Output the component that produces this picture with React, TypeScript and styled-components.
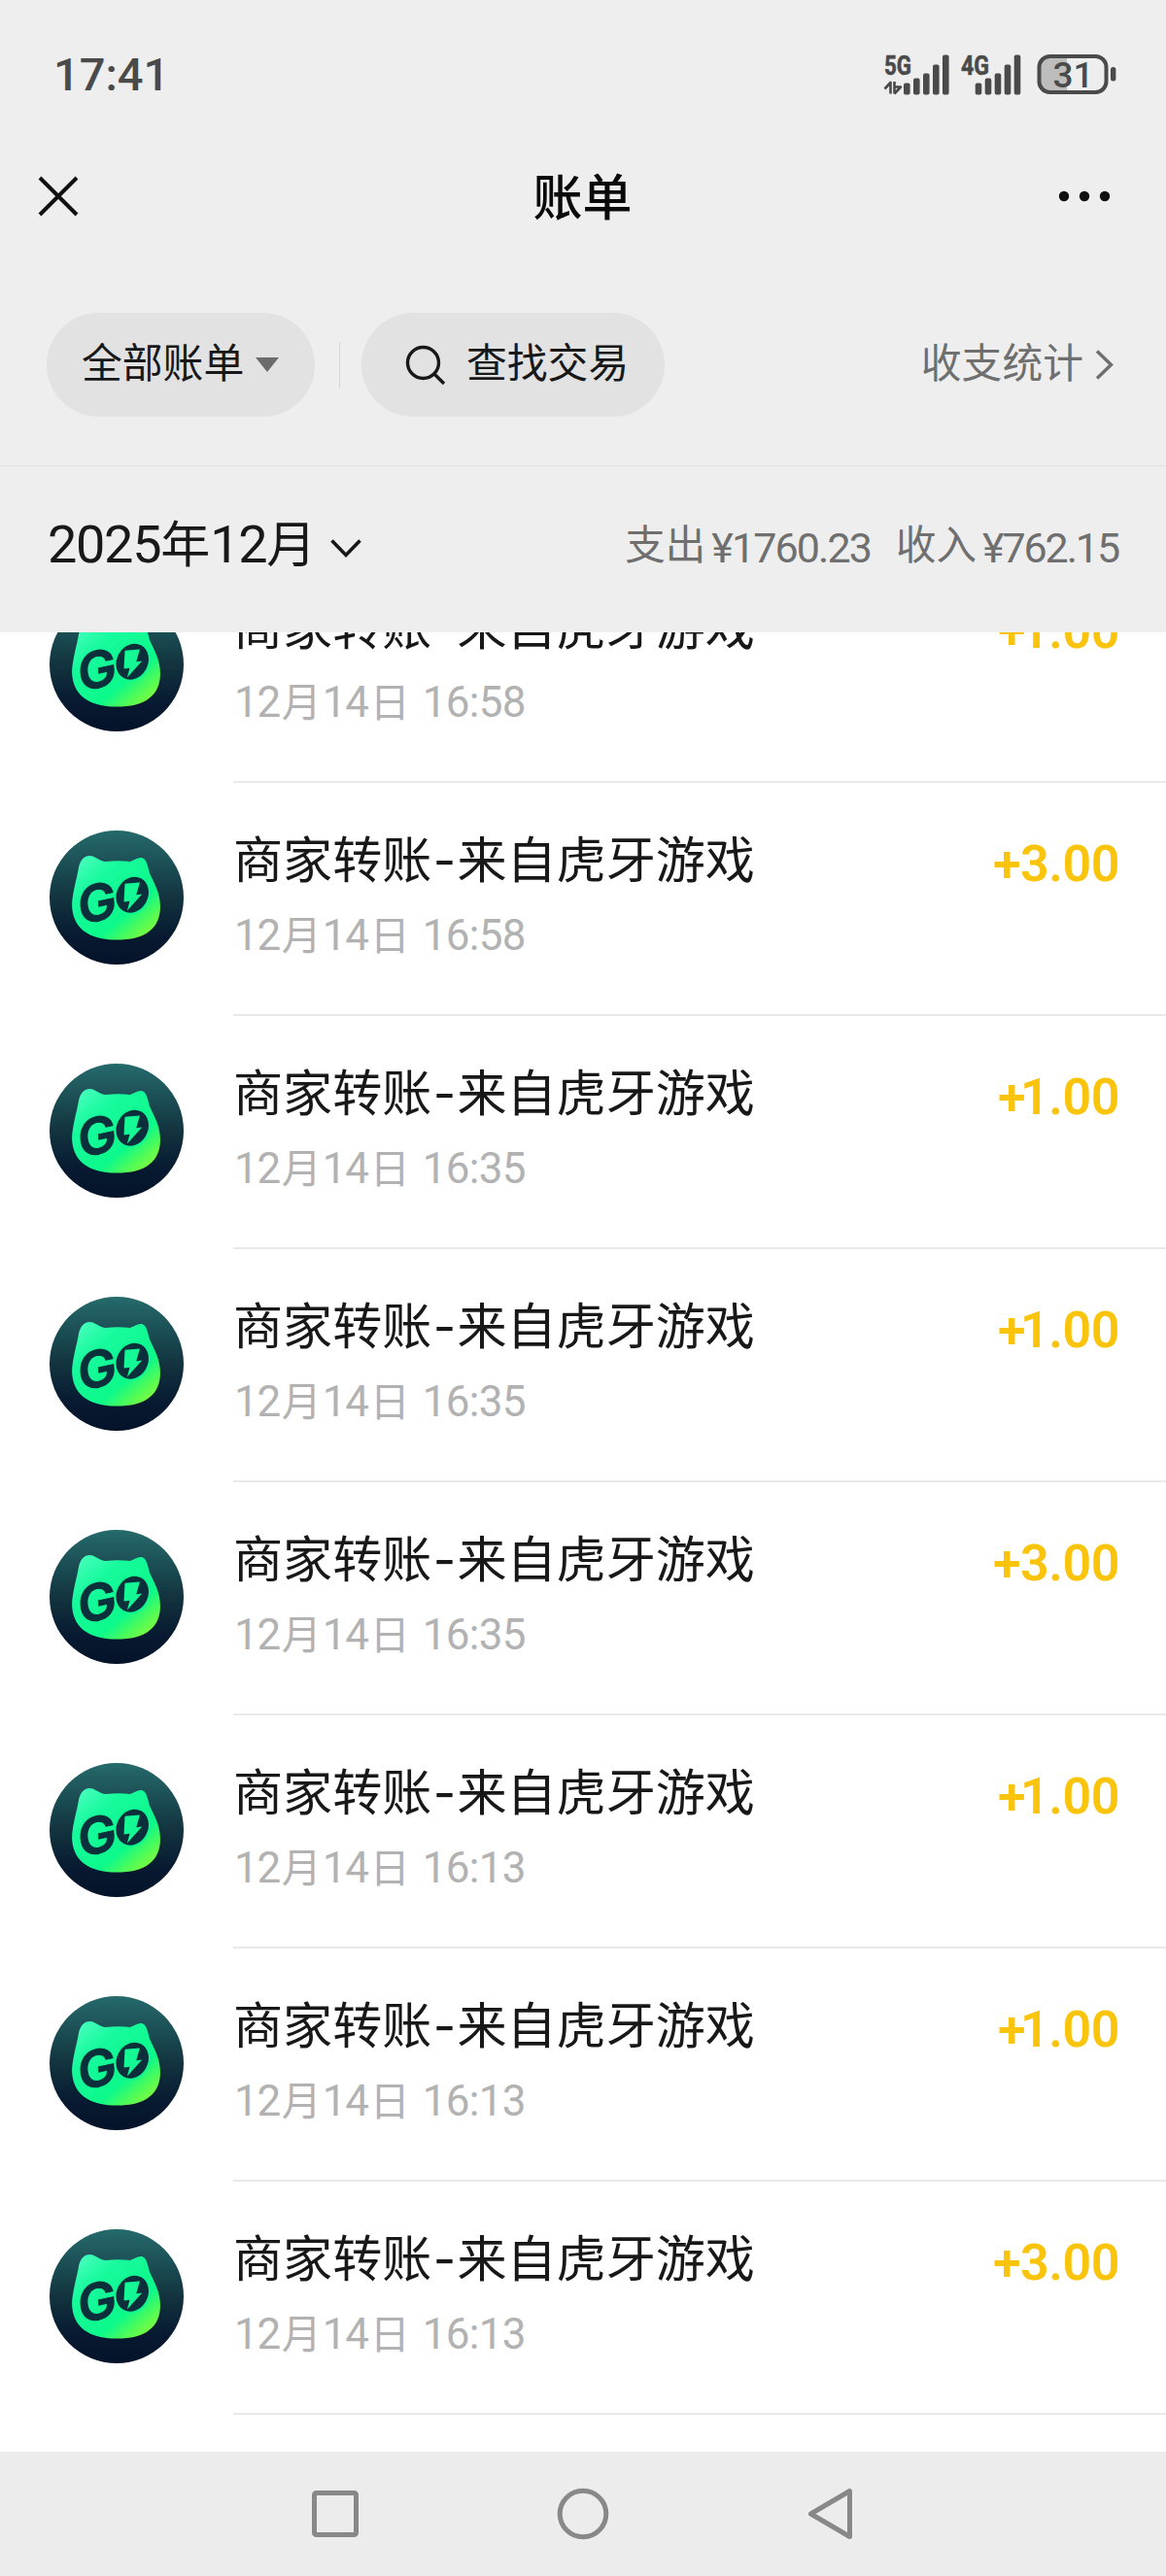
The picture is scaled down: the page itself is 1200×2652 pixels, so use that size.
import React from 'react'
import styled, { createGlobalStyle } from 'styled-components'

const HAN = `'Noto Sans CJK SC', 'Noto Sans', sans-serif`
const LATIN = `Roboto, 'Noto Sans CJK SC', sans-serif`

const records = [
  { time: '16:58', amount: '1.00' },
  { time: '16:58', amount: '3.00' },
  { time: '16:35', amount: '1.00' },
  { time: '16:35', amount: '1.00' },
  { time: '16:35', amount: '3.00' },
  { time: '16:13', amount: '1.00' },
  { time: '16:13', amount: '1.00' },
  { time: '16:13', amount: '3.00' },
]

const GlobalStyle = createGlobalStyle`
  * {
    box-sizing: border-box;
  }
  body {
    margin: 0;
    background: #ffffff;
  }
`

const Screen = styled.div`
  display: flex;
  flex-direction: column;
  width: 1200px;
  height: 2652px;
  overflow: hidden;
  background: #ffffff;
  color: #181818;
  font-family: ${HAN};
  white-space: nowrap;

  svg {
    display: block;
    flex: none;
    overflow: visible;
  }
`

const Header = styled.header`
  flex: none;
  height: 651px;
  background: #eeeeee;
`

const StatusBar = styled.div`
  display: flex;
  justify-content: space-between;
  height: 152px;
  padding: 56px 51px 0 55px;
`

const Clock = styled.span`
  font: 500 47px/42px ${LATIN};
  color: #4a4a4a;
`

const TitleBar = styled.div`
  display: grid;
  grid-template-columns: 1fr auto 1fr;
  align-items: center;
  height: 100px;
  padding: 0 57px 0 38px;

  svg:last-child {
    justify-self: end;
  }
`

const Title = styled.h1`
  margin: -5px 0 0;
  padding-left: 18px;
  font-size: 51px;
  line-height: 60px;
  font-weight: 500;
  color: #0a0a0a;
`

const FilterBar = styled.div`
  display: flex;
  align-items: center;
  height: 228px;
  padding: 70px 54px 50px 48px;
  border-bottom: 1px solid #dfdfdf;
`

const Pill = styled.button<{ $width: number; $gap: number; $indent: number }>`
  display: flex;
  align-items: center;
  gap: ${({ $gap }) => $gap}px;
  width: ${({ $width }) => $width}px;
  height: 107px;
  padding: 0 0 0 ${({ $indent }) => $indent}px;
  border: none;
  border-radius: 54px;
  background: #e2e2e2;
  color: #181818;
  font-family: ${HAN};
  font-size: 41.8px;
  line-height: 60px;

  span {
    margin-top: -9px;
  }
`

const PillDivider = styled.div`
  width: 1px;
  height: 48px;
  margin: 0 22px 0 25px;
  background: #d6d6d6;
`

const StatsLink = styled.div`
  display: flex;
  align-items: center;
  gap: 12px;
  margin-left: auto;
  font-size: 41.8px;
  line-height: 60px;
  color: #6f6f6f;

  span {
    margin-top: -9px;
  }
`

const MonthBar = styled.div`
  display: flex;
  justify-content: space-between;
  align-items: baseline;
  padding: 47px 49px 0 49px;
`

const Month = styled.div`
  display: flex;
  align-items: baseline;
  font-size: 51px;
  line-height: 60px;

  svg {
    margin: 10px 0 0 15px;
    align-self: center;
  }
`

const Digits = styled.span<{ $size: number; $spacing?: number; $gap?: string }>`
  font-family: ${LATIN};
  font-size: ${({ $size }) => $size}px;
  letter-spacing: ${({ $spacing }) => $spacing || 0}px;
  margin: ${({ $gap }) => $gap || '0'};
`

const Totals = styled.div`
  display: flex;
  gap: 26px;
  font-size: 41.5px;
  line-height: 60px;
  color: #6f6f6f;
`

const TotalLabel = styled.span`
  vertical-align: 3px;
`

const List = styled.main`
  flex: 1;
  display: flex;
  flex-direction: column;
  overflow: hidden;
  /* scrolled so that the first record sits partly behind the header */
  > :first-child {
    margin-top: -85px;
  }
`

const Record = styled.div`
  display: flex;
  flex: none;
  height: 240px;
  padding-left: 51px;
`

const Avatar = styled.svg`
  margin: 49px 51px 0 0;
`

const RecordBody = styled.div`
  display: flex;
  justify-content: space-between;
  flex: 1;
  padding: 46px 48px 0 0;
  border-bottom: 2px solid #e9e9e9;
`

const RecordTitle = styled.div`
  font-size: 51.1px;
  line-height: 60px;
`

const Dash = styled.span`
  display: inline-block;
  width: 26px;
  font-family: Inter, sans-serif;
  text-align: center;
`

const RecordTime = styled.div`
  margin-top: 20px;
  padding-left: 1px;
  font-size: 41px;
  line-height: 50px;
  height: 50px;
  color: #b2b2b2;
`

const Amount = styled.div`
  margin-top: 8px;
  font: 600 52px/60px ${LATIN};
  letter-spacing: -0.5px;
  color: #fac40d;
`

/* pulls a leading 1 closer to the sign */
const Sign = styled.span<{ $tight: boolean }>`
  letter-spacing: ${({ $tight }) => ($tight ? -5.5 : -0.5)}px;
`

const NavBar = styled.nav`
  display: flex;
  flex: none;
  height: 128px;
  padding: 36px 320px 0 318px;
  justify-content: space-between;
  background: #ececec;
`

const bars = [12, 17, 22, 31, 41]

const Bars = ({ x }: { x: number }) => (
  <>
    {bars.map((height, i) => (
      <rect key={height} x={x + i * 10} y={41.5 - height} width="6.6" height={height} rx="2" fill="#4a4a4a" />
    ))}
  </>
)

const StatusIcons = () => (
  <svg width="239" height="42" viewBox="0 0 239 42" fontFamily="Roboto, sans-serif" fill="#4a4a4a">
    <text x="0" y="20.5" fontSize="27.5" fontWeight="700" stroke="#4a4a4a" strokeWidth="0.6" textLength="28" lengthAdjust="spacingAndGlyphs">
      5G
    </text>
    <path d="M0.5 35.5L6.5 29V40.5M10.5 28v12.5M10.5 40.5L17 33.5H11" fill="none" stroke="#4a4a4a" strokeWidth="2.6" strokeLinejoin="round" />
    <Bars x={20} />
    <text x="79" y="20.5" fontSize="27.5" fontWeight="700" stroke="#4a4a4a" strokeWidth="0.6" textLength="29" lengthAdjust="spacingAndGlyphs">
      4G
    </text>
    <Bars x={93.7} />
    <path d="M169 4h19v34h-19a11 11 0 0 1-11-11V15a11 11 0 0 1 11-11z" fill="#bdbdbd" />
    <rect x="159.5" y="2" width="69" height="37" rx="11" fill="none" stroke="#4a4a4a" strokeWidth="4" />
    <rect x="233" y="13" width="5.4" height="14.5" rx="2.5" />
    <text x="173.5" y="33.8" fontSize="37" fontWeight="500">
      31
    </text>
  </svg>
)

const GoAvatar = () => (
  <Avatar width="138" height="138" viewBox="64 44 413 413">
    <defs>
      <linearGradient id="disc" x1="0" y1="0" x2="0" y2="1">
        <stop offset="0" stopColor="#256a6c" />
        <stop offset="0.5" stopColor="#12343f" />
        <stop offset="0.8" stopColor="#071930" />
        <stop offset="1" stopColor="#04132a" />
      </linearGradient>
      <linearGradient id="cat" x1="0.05" y1="0" x2="0.9" y2="0.95">
        <stop offset="0" stopColor="#4effc0" />
        <stop offset="0.3" stopColor="#17fa9d" />
        <stop offset="0.7" stopColor="#0cf98b" />
        <stop offset="0.87" stopColor="#55fb54" />
        <stop offset="1" stopColor="#86fc3a" />
      </linearGradient>
    </defs>
    <circle cx="270.5" cy="250.5" r="206.5" fill="url(#disc)" />
    <path
      d="M133 270C136 228 148 192 153 162C157 138 168 123 188 122C207 123 216 139 238 140Q275 135 312 140C326 134 336 126 348 128C362 132 366 150 372 175C385 205 405 235 405 278C405 345 360 381 270 381C185 381 133 345 133 270Z"
      fill="url(#cat)"
    />
    <text
      transform="translate(156 334) rotate(-12) skewX(-8)"
      fontFamily="Inter, sans-serif"
      fontWeight="600"
      fontSize="154"
      textLength="120"
      lengthAdjust="spacingAndGlyphs"
      fill="#0c303b"
      stroke="#0c303b"
      strokeWidth="3"
    >
      G
    </text>
    <ellipse cx="319" cy="242" rx="51" ry="60" transform="rotate(28 319 242)" fill="#0c303b" stroke="#10f891" strokeWidth="6" />
    <path d="M296 208L342 204L331 242L349 240L303 291L311 262L293 264Z" fill="#14f996" />
  </Avatar>
)

const App = () => {
  return (
    <Screen>
      <GlobalStyle />
      <Header>
        <StatusBar>
          <Clock>17:41</Clock>
          <StatusIcons />
        </StatusBar>
        <TitleBar>
          <svg width="44" height="44" viewBox="0 0 44 44">
            <path d="M3 3L41 41M41 3L3 41" stroke="#111" strokeWidth="4" />
          </svg>
          <Title>账单</Title>
          <svg width="54" height="12" viewBox="0 0 54 12" fill="#111">
            <circle cx="6" cy="6" r="5.2" />
            <circle cx="27" cy="6" r="5.2" />
            <circle cx="48" cy="6" r="5.2" />
          </svg>
        </TitleBar>
        <FilterBar>
          <Pill $width={276} $gap={12} $indent={36}>
            <span>全部账单</span>
            <svg width="24" height="15" viewBox="0 0 24 15">
              <path d="M0 0H24L12 15Z" fill="#6b6b6b" />
            </svg>
          </Pill>
          <PillDivider />
          <Pill $width={312} $gap={21} $indent={45}>
            <svg width="42" height="42" viewBox="0 0 42 42" fill="none" stroke="#181818" strokeWidth="3.4">
              <circle cx="18.5" cy="18.5" r="16" />
              <path d="M30 30L40 40" />
            </svg>
            <span>查找交易</span>
          </Pill>
          <StatsLink>
            <span>收支统计</span>
            <svg width="19" height="31" viewBox="0 0 19 31" fill="none" stroke="#6f6f6f" strokeWidth="3.4">
              <path d="M2 1.5L16.5 15.5L2 29.5" />
            </svg>
          </StatsLink>
        </FilterBar>
        <MonthBar>
          <Month>
            <Digits $size={54} $spacing={-1.3}>
              2025
            </Digits>
            年
            <Digits $size={54} $spacing={-1.3}>
              12
            </Digits>
            月
            <svg width="32" height="19" viewBox="0 0 32 19" fill="none" stroke="#181818" strokeWidth="3.6">
              <path d="M1.5 1.5L16 16.5L30.5 1.5" />
            </svg>
          </Month>
          <Totals>
            <div>
              <TotalLabel>支出</TotalLabel>
              <Digits $size={43} $spacing={-1.9} $gap="0 0 0 6px">
                ¥1760.23
              </Digits>
            </div>
            <div>
              <TotalLabel>收入</TotalLabel>
              <Digits $size={43} $spacing={-2.1} $gap="0 0 0 6px">
                ¥762.15
              </Digits>
            </div>
          </Totals>
        </MonthBar>
      </Header>
      <List>
        {records.map((record, index) => (
          <Record key={index}>
            <GoAvatar />
            <RecordBody>
              <div>
                <RecordTitle>
                  商家转账<Dash>-</Dash>来自虎牙游戏
                </RecordTitle>
                <RecordTime>
                  <Digits $size={44} $spacing={-1.3} $gap="0 2px 0 0">
                    12
                  </Digits>
                  月
                  <Digits $size={44} $spacing={-1.3} $gap="0 2px 0 1px">
                    14
                  </Digits>
                  日
                  <Digits $size={44} $spacing={-0.7} $gap="0 0 0 13px">
                    {record.time}
                  </Digits>
                </RecordTime>
              </div>
              <Amount>
                <Sign $tight={record.amount.startsWith('1')}>+</Sign>
                {record.amount}
              </Amount>
            </RecordBody>
          </Record>
        ))}
      </List>
      <NavBar>
        <svg width="54" height="56" viewBox="0 0 54 56" fill="none" stroke="#888888" strokeWidth="5">
          <rect x="5.5" y="6.5" width="43" height="43" rx="2" />
        </svg>
        <svg width="56" height="56" viewBox="0 0 56 56" fill="none" stroke="#888888" strokeWidth="5">
          <circle cx="28" cy="28" r="23.8" />
        </svg>
        <svg width="52" height="56" viewBox="0 0 52 56" fill="none" stroke="#888888" strokeWidth="5" strokeLinejoin="round">
          <path d="M46.5 4.5V51.5L6.5 28Z" />
        </svg>
      </NavBar>
    </Screen>
  )
}

export default App
